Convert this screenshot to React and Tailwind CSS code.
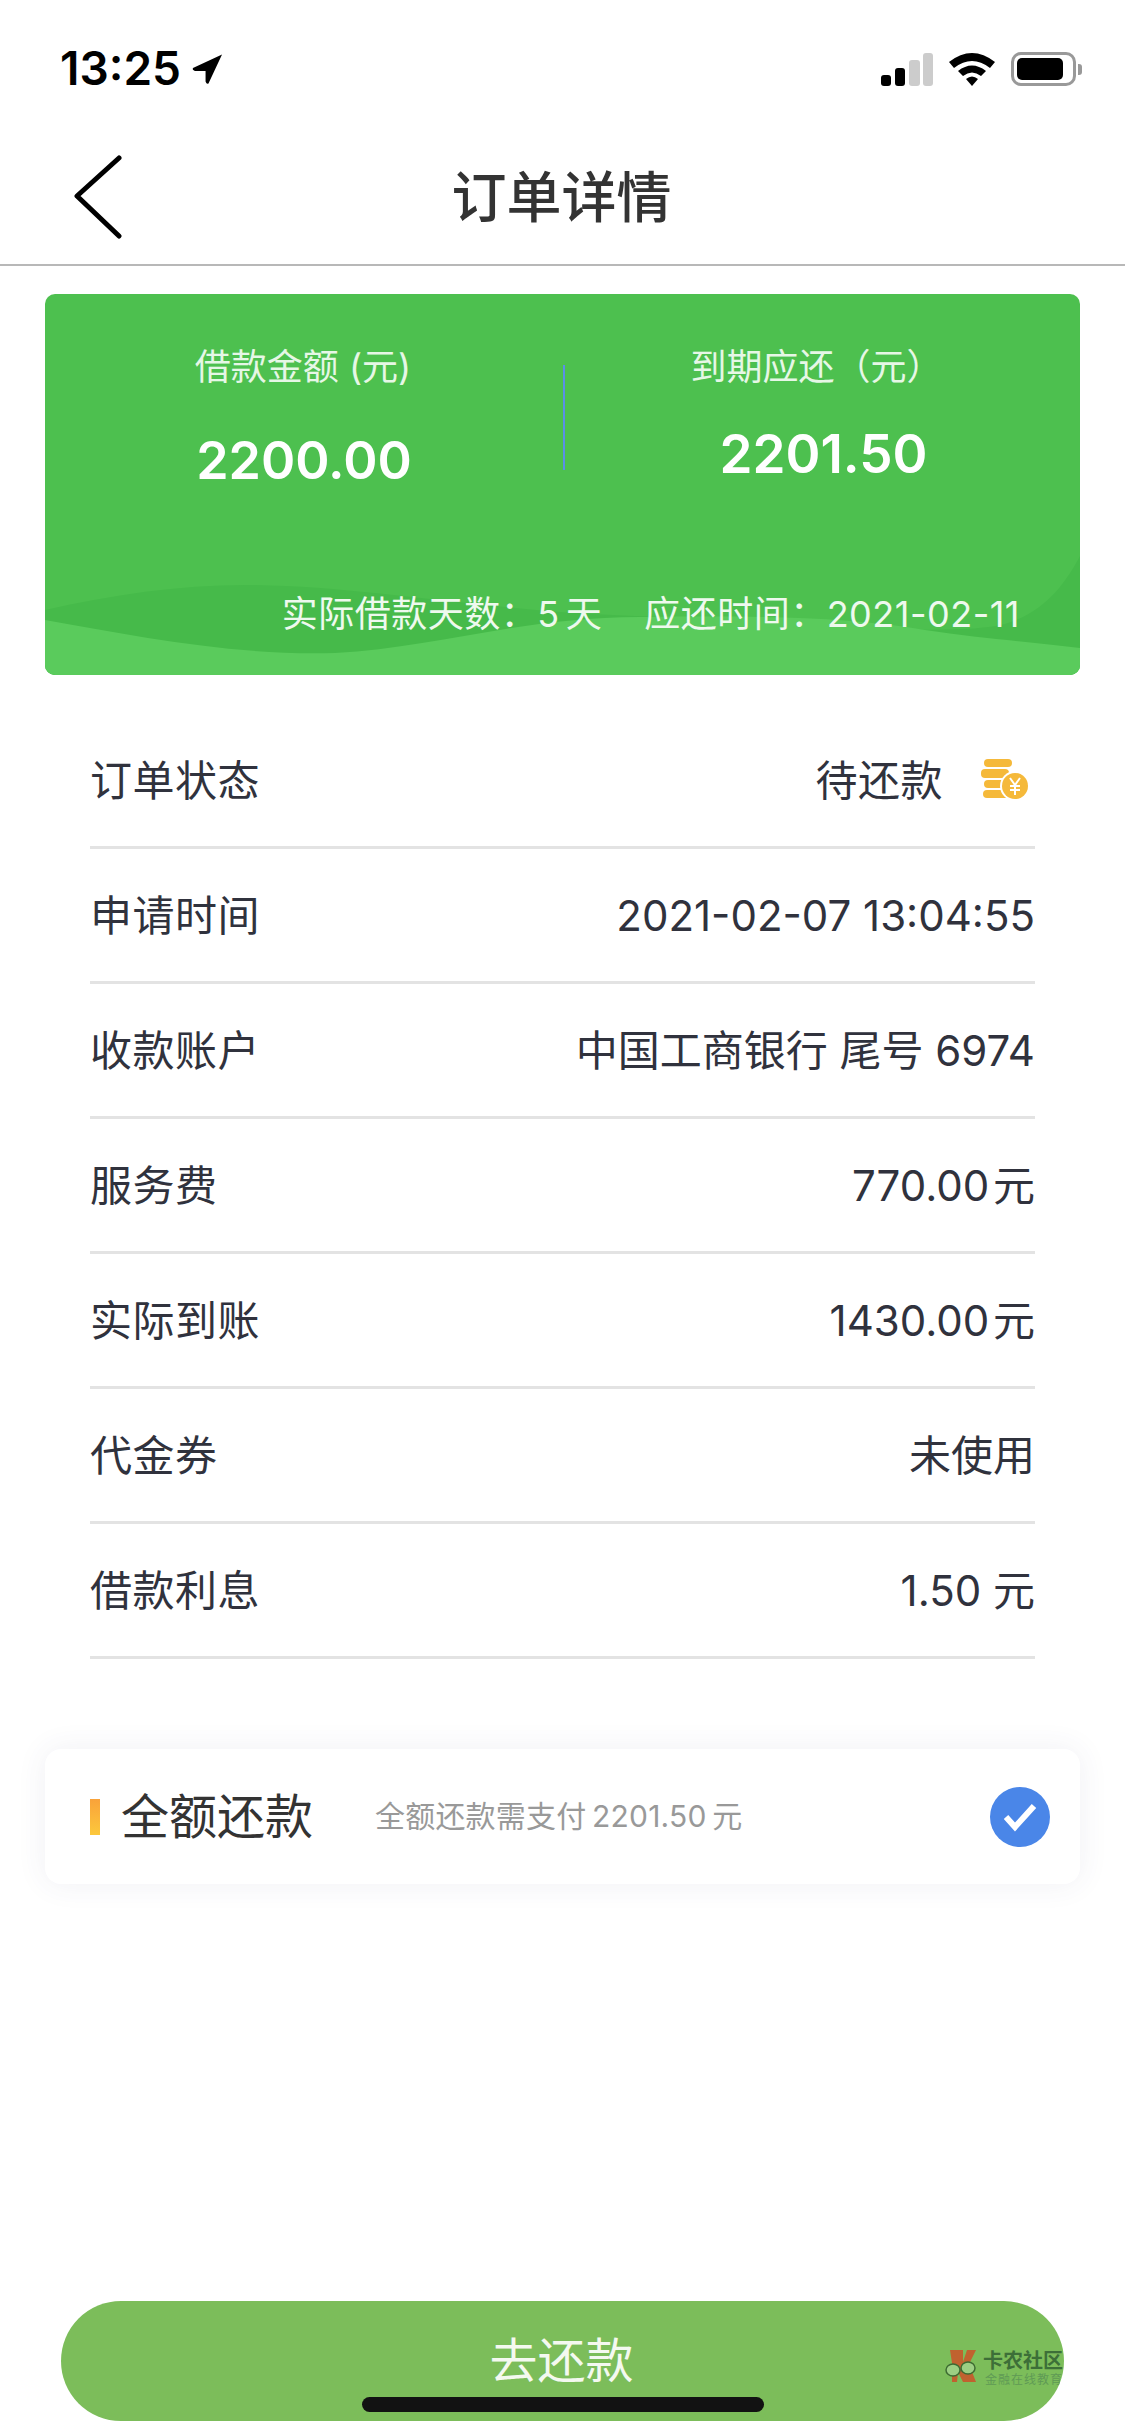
import React from "react";

const font = { fontFamily: "Inter, 'Noto Sans CJK SC', sans-serif" };

const rows = [
  { label: "申请时间", value: "2021-02-07 13:04:55" },
  { label: "收款账户", value: "中国工商银行 尾号 6974" },
  { label: "服务费", value: "770.00\u200a元" },
  { label: "实际到账", value: "1430.00\u200a元" },
  { label: "代金券", value: "未使用" },
  { label: "借款利息", value: "1.50 元" },
];

function StatusBar() {
  return (
    <div className="h-[130px] pt-[52px] pl-[60px] pr-[43px] flex items-start justify-between">
      <div className="flex items-center gap-[11px]">
        <span className="text-[46px] leading-[33px] font-semibold text-black">13:25</span>
        <svg width="31" height="32" viewBox="0 0 32 32">
          <path d="M31 1 L1 15 Q0 17 3 18 L14 18 L14 29 Q15 32 17 31 Z" fill="#000" />
        </svg>
      </div>
      <div className="flex items-start">
        <svg width="52" height="34" viewBox="0 0 52 34">
          <rect x="0" y="23" width="10" height="11" rx="3" fill="#000" />
          <rect x="14" y="16" width="10" height="18" rx="3" fill="#000" />
          <rect x="28" y="8" width="11" height="26" rx="3" fill="#ccc" />
          <rect x="42" y="1" width="10" height="33" rx="3" fill="#ccc" />
        </svg>
        <svg className="ml-[15px]" width="48" height="34" viewBox="0 0 48 34">
          <path d="M1 10 Q24 -8 47 10 L42 16 Q24 2 6 16 Z" fill="#000" />
          <path d="M10 19 Q24 8 38 19 L33 24 Q24 17 15 24 Z" fill="#000" />
          <path d="M18 27 Q24 22 30 27 L24 34 Z" fill="#000" />
        </svg>
        <div className="ml-[15px] flex items-center">
          <div className="w-[65px] h-[34px] border-[3px] border-[#999] rounded-[10px] p-[3px]">
            <div className="h-full w-[46px] bg-black rounded-[5px]" />
          </div>
          <div className="ml-[2px] w-[4px] h-[11px] bg-[#999] rounded-r-[3px]" />
        </div>
      </div>
    </div>
  );
}

function Wave() {
  return (
    <svg className="absolute inset-0" width="1035" height="381" viewBox="0 0 1035 381">
      <path d="M0 316 C70 300 140 290 210 291 C330 293 450 318 590 322 C720 326 900 345 960 330 C1000 318 1020 290 1035 262 L1035 381 L0 381 Z" fill="#46ba4a" />
      <path d="M0 326 C90 342 190 362 290 359 C390 354 480 322 600 323 C700 322 800 322 880 336 C940 345 990 348 1035 354 L1035 381 L0 381 Z" fill="#5acb5c" />
    </svg>
  );
}

function CoinIcon() {
  return (
    <svg className="ml-[38px] mr-[7px]" width="47" height="42" viewBox="0 0 47 42">
      <rect x="3" y="0" width="28" height="8" rx="4" fill="#f5b93a" />
      <rect x="0" y="10" width="28" height="9" rx="4" fill="#f5b93a" />
      <rect x="3" y="21" width="26" height="8" rx="4" fill="#f5b93a" />
      <rect x="2" y="31" width="28" height="8" rx="4" fill="#f5b93a" />
      <circle cx="34" cy="27" r="15" fill="#fff" />
      <circle cx="34" cy="27" r="13" fill="#f5b93a" />
      <path d="M29 19 L34 26 L39 19 M29 27 H39 M29 31 H39 M34 26 V36" stroke="#fff" strokeWidth="2" fill="none" />
    </svg>
  );
}

function WatermarkLogo() {
  return (
    <svg width="36" height="36" viewBox="0 0 36 36">
      <path d="M5 2 H18 V14 L22 2 H31 L24 16 L31 34 H18 L13 24 L12 34 H7 V15 Z" fill="#c0622f" />
      <ellipse cx="8" cy="22" rx="7" ry="6" fill="#9ccf83" stroke="#3d6b32" strokeWidth="1.5" />
      <ellipse cx="23" cy="20" rx="7" ry="6" fill="#9ccf83" stroke="#3d6b32" strokeWidth="1.5" />
    </svg>
  );
}

function Row({ label, children }) {
  return (
    <div className="h-[135px] flex items-center justify-between border-b-[3px] border-[#e3e3e3] text-[42px] text-[#30323d]">
      <span className="tracking-[0.5px]">{label}</span>
      <span className="flex items-center">{children}</span>
    </div>
  );
}

export default function App() {
  return (
    <div className="relative w-[1125px] h-[2436px] bg-white flex flex-col overflow-hidden" style={font}>
      <StatusBar />

      {/* Nav */}
      <div className="h-[136px] border-b-2 border-[#b8b8b8] relative flex items-center justify-center">
        <svg className="absolute left-[72px] top-[25px]" width="52" height="84" viewBox="0 0 52 84">
          <path d="M47 3 L5 41 L47 81" stroke="#000" strokeWidth="5" strokeLinecap="round" strokeLinejoin="round" fill="none" />
        </svg>
        <h1 className="text-[55px] font-medium text-[#333] mr-[2px]">订单详情</h1>
      </div>

      {/* Amount card */}
      <div className="relative mt-[28px] mx-[45px] h-[381px] bg-[#4dc04f] rounded-[10px] overflow-hidden flex flex-col text-white shrink-0">
        <Wave />
        <div className="relative flex items-start pt-[50px]">
          <div className="w-[518px] flex flex-col items-center">
            <span className="text-[36px] leading-[46px] text-[#e6f7e6] mr-[2px]">借款金额 (元)</span>
            <span className="mt-[46px] text-[52px] leading-[50px] font-semibold">2200.00</span>
          </div>
          <div className="w-[2px] h-[105px] mt-[21px] bg-[#5b8fe8]" />
          <div className="flex-1 pr-[12px] flex flex-col items-center">
            <span className="text-[36px] leading-[46px] text-[#e6f7e6]">到期应还（元）</span>
            <span className="mt-[39px] ml-[14px] text-[53px] leading-[50px] font-semibold">2201.50</span>
          </div>
        </div>
        <div className="relative mt-auto pb-[40px] pr-[60px] flex justify-end gap-[42px] text-[36px] leading-[42px] tracking-[0.5px] text-[#eef9ee]">
          <span>实际借款天数：5<span className="ml-[6px]">天</span></span>
          <span>应还时间：2021-02-11</span>
        </div>
      </div>

      {/* Detail rows */}
      <div className="mt-[39px] mx-[90px]">
        <Row label="订单状态">
          <span className="tracking-[0.5px]">待还款</span>
          <CoinIcon />
        </Row>
        {rows.map((r) => (
          <Row key={r.label} label={r.label}>{r.value}</Row>
        ))}
      </div>

      {/* Repay option */}
      <div className="mt-[90px] mx-[45px] h-[135px] bg-white rounded-[16px] shadow-[0_0_30px_rgba(60,70,110,0.08)] flex items-center pl-[45px] pr-[30px] shrink-0">
        <div className="w-[10px] h-[36px] bg-gradient-to-b from-[#f9a23a] to-[#fcc83c]" />
        <span className="ml-[21px] text-[48px] text-[#333]">全额还款</span>
        <span className="ml-[62px] text-[30px] tracking-[0.2px] text-[#999]">全额还款需支付&#8201;2201.50&#8201;元</span>
        <div className="ml-auto w-[60px] h-[60px] rounded-full bg-[#4a86e8] flex items-center justify-center">
          <svg width="36" height="30" viewBox="0 0 36 30">
            <path d="M4 15 L13 25 L32 4" stroke="#fff" strokeWidth="6" fill="none" />
          </svg>
        </div>
      </div>

      {/* Button */}
      <div className="relative mt-auto mb-[15px] mx-[61px] h-[120px] bg-[#7cbd5a] rounded-full overflow-hidden flex items-center justify-center shrink-0">
        <span className="text-[48px] text-[#f4f9f0] mr-[2px]">去还款</span>
        <div className="absolute left-[884px] top-[47px] flex items-start">
          <WatermarkLogo />
          <div className="ml-[2px] mt-[3px] flex flex-col">
            <span className="text-[20px] leading-[20px] font-bold text-[#3d6f38] whitespace-nowrap">卡农社区</span>
            <span className="mt-[2px] ml-[2px] text-[12px] leading-[14px] tracking-[1px] text-[#5f9a55] whitespace-nowrap">金融在线教育</span>
          </div>
        </div>
      </div>

      {/* Home indicator */}
      <div className="absolute left-[362px] top-[2397px] w-[402px] h-[15px] rounded-full bg-[#121212]" />
    </div>
  );
}
